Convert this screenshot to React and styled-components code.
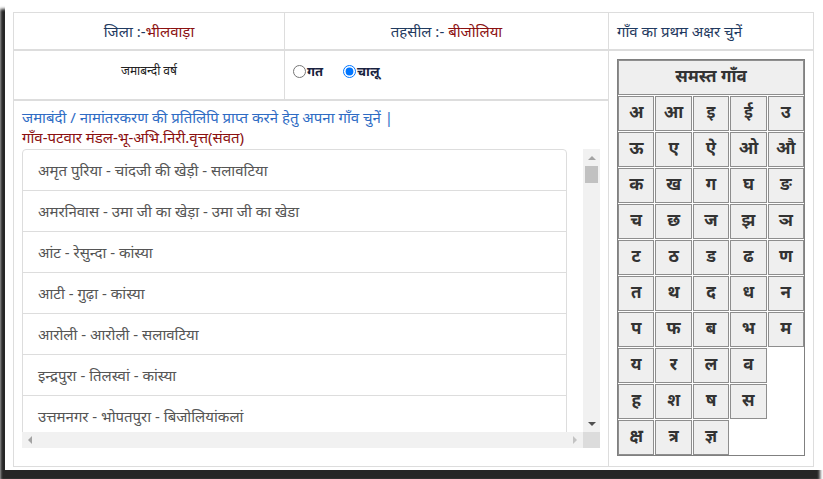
import React from 'react';
import styled, { createGlobalStyle, css } from 'styled-components';

const GlobalStyle = createGlobalStyle`
  html, body {
    margin: 0;
    padding: 0;
    background: #fff;
  }
  body {
    font-family: "Noto Sans", "Noto Sans Devanagari", "Liberation Sans", sans-serif;
    font-size: 15px;
    color: #333;
  }
`;

const Page = styled.div`
  padding: 0 0 12px 5px;
`;

const Panel = styled.div`
  background: #fff;
  padding: 12px 10px 3px 8px;
  box-shadow: -4px 10px 3px 1px #262626;
`;

const Table = styled.table`
  width: 800px;
  table-layout: fixed;
  border-collapse: collapse;
  border: 1px solid #ddd;
`;

const Cell = styled.td`
  border: 1px solid #ddd;
  border-bottom-width: ${({ $thick }) => ($thick ? '2px' : '1px')};
  padding: ${({ $pad }) => $pad || '8px'};
  line-height: 20px;
  text-align: ${({ $align }) => $align || 'left'};
  vertical-align: ${({ $valign }) => $valign || 'middle'};
  height: ${({ $h }) => $h || 'auto'};
`;

const Label = styled.span`
  color: #1f3a60;
`;

const Value = styled.span`
  color: #8b1010;
`;

const SmallLabel = styled.span`
  font-size: 12px;
  color: #222;
`;

const RadioGroup = styled.div`
  display: flex;
  align-items: center;
  gap: 20px;
  margin-top: 2px;
`;

const RadioLabel = styled.label`
  display: flex;
  align-items: center;
  font-size: 13px;
  font-weight: 700;
  color: #1a2340;
`;

const Radio = styled.input`
  width: 13px;
  height: 13px;
  margin: 0 1px 0 0;
`;

const Info = styled.div`
  color: #2f6cc4;
  margin-top: -2px;
`;

const SubInfo = styled.div`
  color: #8b1010;
  margin-bottom: 2px;
`;

const ScrollFrame = styled.div`
  display: grid;
  grid-template-columns: 1fr 17px;
  grid-template-rows: 283px 16px;
  background: #f1f1f1;
`;

const Viewport = styled.div`
  overflow: hidden;
  background: #fff;
`;

const VScroll = styled.div`
  display: flex;
  flex-direction: column;
  background: #f1f1f1;
`;

const HScroll = styled.div`
  display: flex;
  background: #f1f1f1;
`;

const ScrollCorner = styled.div`
  background: #dcdcdc;
`;

const arrows = {
  up: css`
    border-left: 4px solid transparent;
    border-right: 4px solid transparent;
    border-bottom: 4px solid var(--c);
  `,
  down: css`
    border-left: 4px solid transparent;
    border-right: 4px solid transparent;
    border-top: 4px solid var(--c);
  `,
  left: css`
    border-top: 4px solid transparent;
    border-bottom: 4px solid transparent;
    border-right: 4px solid var(--c);
  `,
  right: css`
    border-top: 4px solid transparent;
    border-bottom: 4px solid transparent;
    border-left: 4px solid var(--c);
  `,
};

const ScrollButton = styled.div`
  --c: ${({ $color }) => $color || '#a3a3a3'};
  flex: none;
  width: ${({ $dir }) => ($dir === 'up' || $dir === 'down' ? '17px' : '16px')};
  height: ${({ $dir }) => ($dir === 'up' || $dir === 'down' ? '17px' : '16px')};
  display: flex;
  align-items: center;
  justify-content: center;

  &::before {
    content: '';
    width: 0;
    height: 0;
    ${({ $dir }) => arrows[$dir]}
  }
`;

const Track = styled.div`
  flex: 1;
`;

const Thumb = styled.div`
  flex: none;
  height: 17px;
  margin: 0 2px;
  background: #c1c1c1;
`;

const ListGroup = styled.ul`
  list-style: none;
  margin: 0 16px 0 0;
  padding: 0;
`;

const ListItem = styled.li`
  padding: 10px 15px;
  line-height: 20px;
  border: 1px solid #ddd;
  margin-bottom: -1px;
  color: #555;
  background: #fff;
  white-space: nowrap;

  &:first-child {
    border-top-left-radius: 4px;
    border-top-right-radius: 4px;
  }
`;

const LetterGrid = styled.div`
  display: grid;
  grid-template-columns: repeat(5, 1fr);
  grid-auto-rows: 35px;
  gap: 1px;
  border: 1px solid #808080;
  background: #fff;
`;

const LetterButton = styled.button`
  grid-column: ${({ $span }) => ($span ? `span ${$span}` : 'auto')};
  margin: 0;
  padding: 0 0 4px;
  border: 1px solid #8e8e8e;
  background: #efefef;
  color: #333;
  font-family: "Noto Sans", "Noto Sans Devanagari", "Liberation Sans", sans-serif;
  font-size: 17px;
  font-weight: 700;
  line-height: 1;
  cursor: pointer;
`;

const GridGap = styled.span`
  grid-column: span ${({ $span }) => $span};
`;

const villages = [
  'अमृत पुरिया - चांदजी की खेड़ी - सलावटिया',
  'अमरनिवास - उमा जी का खेड़ा - उमा जी का खेडा',
  'आंट - रेसुन्दा - कांस्या',
  'आटी - गुढ़ा - कांस्या',
  'आरोली - आरोली - सलावटिया',
  'इन्द्रपुरा - तिलस्वां - कांस्या',
  'उत्तमनगर - भोपतपुरा - बिजोलियांकलां',
];

const letterRows = [
  ['अ', 'आ', 'इ', 'ई', 'उ'],
  ['ऊ', 'ए', 'ऐ', 'ओ', 'औ'],
  ['क', 'ख', 'ग', 'घ', 'ङ'],
  ['च', 'छ', 'ज', 'झ', 'ञ'],
  ['ट', 'ठ', 'ड', 'ढ', 'ण'],
  ['त', 'थ', 'द', 'ध', 'न'],
  ['प', 'फ', 'ब', 'भ', 'म'],
  ['य', 'र', 'ल', 'व'],
  ['ह', 'श', 'ष', 'स'],
  ['क्ष', 'त्र', 'ज्ञ'],
];

const LetterPicker = () => (
  <LetterGrid>
    <LetterButton $span={5}>समस्त गाँव</LetterButton>
    {letterRows.map((row, i) => (
      <React.Fragment key={i}>
        {row.map((l) => (
          <LetterButton key={l}>{l}</LetterButton>
        ))}
        {row.length < 5 && <GridGap $span={5 - row.length} />}
      </React.Fragment>
    ))}
  </LetterGrid>
);

const VillageList = () => (
  <ScrollFrame>
    <Viewport>
      <ListGroup>
        {villages.map((v) => (
          <ListItem key={v}>{v}</ListItem>
        ))}
      </ListGroup>
    </Viewport>
    <VScroll>
      <ScrollButton $dir="up" $color="#a3a3a3" />
      <Thumb />
      <Track />
      <ScrollButton $dir="down" $color="#505050" />
    </VScroll>
    <HScroll>
      <ScrollButton $dir="left" $color="#a3a3a3" />
      <Track />
      <ScrollButton $dir="right" $color="#c3c3c3" />
    </HScroll>
    <ScrollCorner />
  </ScrollFrame>
);

export default function App() {
  return (
    <Page>
      <GlobalStyle />
      <Panel>
        <Table>
          <colgroup>
            <col style={{ width: 271 }} />
            <col style={{ width: 324 }} />
            <col style={{ width: 205 }} />
          </colgroup>
          <tbody>
            <tr>
              <Cell $thick $align="center">
                <Label>जिला :-</Label>
                <Value>भीलवाड़ा</Value>
              </Cell>
              <Cell $thick $align="center">
                <Label>तहसील :- </Label>
                <Value>बीजोलिया</Value>
              </Cell>
              <Cell $thick>
                <Label>गाँव का प्रथम अक्षर चुनें</Label>
              </Cell>
            </tr>
            <tr>
              <Cell $thick $align="center" $valign="top" $h="32px">
                <SmallLabel>जमाबन्दी वर्ष</SmallLabel>
              </Cell>
              <Cell $thick $valign="top" $h="32px">
                <RadioGroup>
                  <RadioLabel>
                    <Radio type="radio" name="year" />
                    गत
                  </RadioLabel>
                  <RadioLabel>
                    <Radio type="radio" name="year" defaultChecked />
                    चालू
                  </RadioLabel>
                </RadioGroup>
              </Cell>
              <Cell rowSpan={2} $valign="top" $pad="8px 8px 10px">
                <LetterPicker />
              </Cell>
            </tr>
            <tr>
              <Cell colSpan={2} $valign="top" $pad="8px 8px 18px">
                <Info>जमाबंदी / नामांतरकरण की प्रतिलिपि प्राप्त करने हेतु अपना गाँव चुनें |</Info>
                <SubInfo>गाँव-पटवार मंडल-भू-अभि.निरी.वृत्त(संवत)</SubInfo>
                <VillageList />
              </Cell>
            </tr>
          </tbody>
        </Table>
      </Panel>
    </Page>
  );
}
